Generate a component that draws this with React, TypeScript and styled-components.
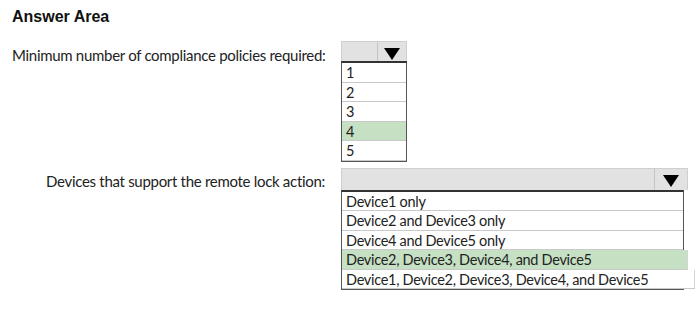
import React from "react";
import styled, { createGlobalStyle } from "styled-components";

const Global = createGlobalStyle`
  html, body { margin: 0; padding: 0; background: #ffffff; }
  body { width: 700px; height: 311px; overflow: hidden; }
`;

const Page = styled.div`
  padding: 7px 0 0 12px;
  font-family: Lato, "Open Sans", sans-serif;
  color: #222;
`;

const Title = styled.h1`
  margin: 0;
  font-family: "Liberation Sans", Arial, sans-serif;
  font-weight: bold;
  font-size: 16px;
  line-height: 19px;
  color: #111;
`;

const Question = styled.div<{ $top: number }>`
  display: grid;
  grid-template-columns: 313px auto;
  column-gap: 16px;
  align-items: start;
  margin-top: ${(p) => p.$top}px;
`;

const Label = styled.div<{ $pad: number }>`
  text-align: right;
  font-size: 15px;
  letter-spacing: -0.3px;
  line-height: 20px;
  padding-top: ${(p) => p.$pad}px;
  white-space: nowrap;
`;

const Dropdown = styled.div<{ $w: number }>`
  width: ${(p) => p.$w}px;
  display: flex;
  flex-direction: column;
`;

const Header = styled.div<{ $h: number }>`
  height: ${(p) => p.$h}px;
  display: flex;
  background: #e2e2e2;
  border: 1px solid #cfcfcf;
  border-bottom: none;
  box-sizing: border-box;
`;

const HeaderFill = styled.div`
  flex: 1;
  border-right: 1px solid #c4c4c4;
`;

const Arrow = styled.div<{ $w: number }>`
  width: ${(p) => p.$w}px;
  display: flex;
  align-items: center;
  justify-content: center;
  padding-top: 4px;
`;

const List = styled.div<{ $w: number }>`
  width: ${(p) => p.$w}px;
  box-sizing: border-box;
  border: 1.5px solid #555;
  border-top: 2px solid #333;
  display: flex;
  flex-direction: column;
`;

const Item = styled.div<{ $sel?: boolean; $h: number; $extra?: number }>`
  height: ${(p) => p.$h}px;
  line-height: ${(p) => p.$h}px;
  padding-left: 4px;
  font-family: Lato, "Open Sans", sans-serif;
  font-size: 14.5px;
  letter-spacing: -0.3px;
  color: #222;
  box-sizing: border-box;
  border-bottom: 1px solid #c9c9c9;
  background: ${(p) => (p.$sel ? "#c6e0c4" : "#ffffff")};
  margin-right: ${(p) => -(p.$extra ?? 0)}px;
  border-right: ${(p) => (p.$extra ? "1px solid #d4d4d4" : "none")};
  white-space: nowrap;
`;

const Triangle = () => (
  <svg width="16" height="12" viewBox="0 0 16 12">
    <polygon points="0,0 16,0 8,12" fill="#000" />
  </svg>
);

const nums = ["1", "2", "3", "4", "5"];
const devices = [
  "Device1 only",
  "Device2 and Device3 only",
  "Device4 and Device5 only",
  "Device2, Device3, Device4, and Device5",
  "Device1, Device2, Device3, Device4, and Device5",
];

export default function App() {
  return (
    <>
      <Global />
      <Page>
        <Title>Answer Area</Title>
        <Question $top={15}>
          <Label $pad={4}>Minimum number of compliance policies required:</Label>
          <Dropdown $w={66}>
            <Header $h={20}>
              <HeaderFill />
              <Arrow $w={28}>
                <Triangle />
              </Arrow>
            </Header>
            <List $w={66}>
              {nums.map((n, i) => (
                <Item key={n} $h={19.5} $sel={i === 3}>
                  {n}
                </Item>
              ))}
            </List>
          </Dropdown>
        </Question>
        <Question $top={6}>
          <Label $pad={3}>Devices that support the remote lock action:</Label>
          <Dropdown $w={347}>
            <Header $h={22}>
              <HeaderFill />
              <Arrow $w={32}>
                <Triangle />
              </Arrow>
            </Header>
            <List $w={343}>
              {devices.map((d, i) => (
                <Item key={d} $h={19.5} $sel={i === 3} $extra={i === 3 ? 5 : i === 4 ? 12 : 0}>
                  {d}
                </Item>
              ))}
            </List>
          </Dropdown>
        </Question>
      </Page>
    </>
  );
}
